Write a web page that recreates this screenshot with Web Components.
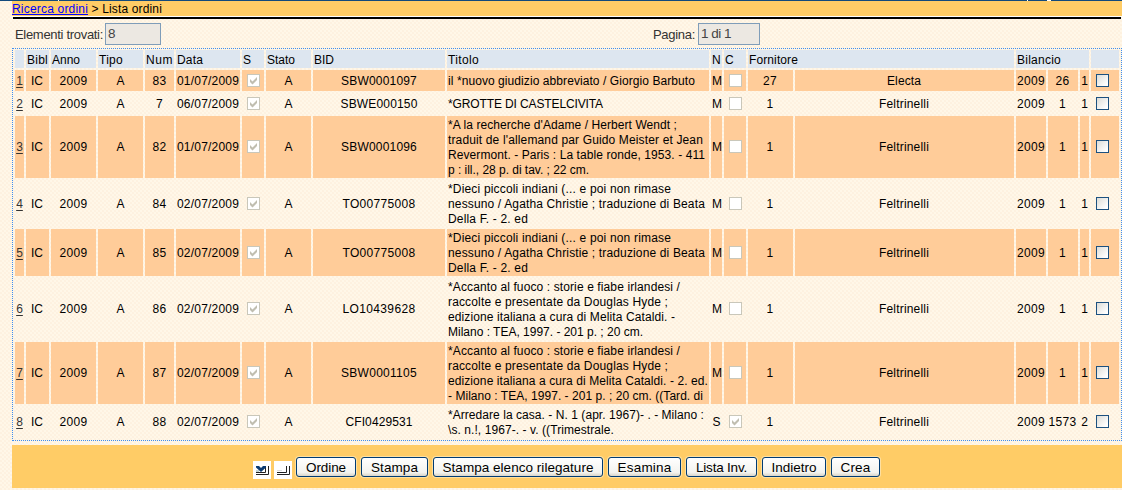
<!DOCTYPE html>
<html lang="it"><head><meta charset="utf-8"><title>Lista ordini</title>
<style>
html,body{margin:0;height:490px;overflow:hidden}
body{font:12px "Liberation Sans",Arial,sans-serif;color:#000;background:#fff6e6}
</style></head><body>
<order-page></order-page>
<script>
const define=(name,css,html,init)=>customElements.define(name,class extends HTMLElement{
  connectedCallback(){
    if(this.shadowRoot)return;
    const root=this.attachShadow({mode:'open'});
    const t=document.createElement('template');
    t.innerHTML='<style>'+css+'</style>'+(typeof html==='function'?html(this):html);
    root.appendChild(t.content.cloneNode(true));
    if(init)init(this,root);
  }
});

// Text set to a given width by adjusting its letter spacing.
define('fit-text',':host{display:inline-block;white-space:pre}span{display:inline-block}','<span><slot></slot></span>',(el,root)=>{
  const w=+el.getAttribute('w');if(!w)return;
  const s=root.querySelector('span'),n=el.textContent.length;
  s.style.letterSpacing=((w-s.getBoundingClientRect().width)/n)+'px';
});

define('check-box',`:host{display:block;width:13px;height:13px;box-sizing:border-box;border:1px solid #c9c7ba;background:#fff}
:host([active]){border-color:#1c5180;background:linear-gradient(135deg,#dcdcd7,#fff 85%)}
svg{display:block}`,el=>el.hasAttribute('checked')?'<svg width="11" height="11"><path d="M2 4 4.5 6.4 9 2V5L4.5 9.4 2 7Z" fill="#c0beb0"/></svg>':'');

define('crumb-bar',`:host{display:block;height:23px;box-sizing:border-box;border-top:1px solid #124a7c;position:relative}
nav{height:15px;margin-left:12px;background:#ffcc66;line-height:17px;white-space:pre;border-bottom:1px solid #fff}
a{display:inline-block;height:14px;box-sizing:border-box;color:#00f;border-bottom:1px solid #00f;vertical-align:top;text-decoration:none}
hr{margin:0 1px 0 13px;border:0;height:2px;background:#000}
i{position:absolute;top:-1px;height:1px;background:#fff}`,
'<nav><a href="#"><fit-text w="76">Ricerca ordini</fit-text></a><fit-text w="74"> &gt; Lista ordini</fit-text></nav><hr><i style="left:58px;width:1px"></i><i style="left:1027px;width:1px"></i><i style="left:1047px;width:4px"></i>');

define('read-field',`:host{display:flex;font-size:13px;color:#333}
label{padding-top:4px;line-height:15px}
div{box-sizing:border-box;height:22px;border:1px solid #7f9db9;background:#ece8e2;font-size:13.5px;line-height:16px;padding:2px 0 0 2px;color:#444}`,
el=>`<label><fit-text w="${el.getAttribute('lw')}">${el.getAttribute('label')}</fit-text></label><div style="width:${el.getAttribute('fw')}px;margin-left:${el.getAttribute('gap')}px"><slot></slot></div>`);

define('data-cell',`:host{display:flex;box-sizing:border-box;align-items:center;justify-content:center;overflow:hidden;line-height:15px;white-space:nowrap}
:host([low]){padding-top:2px}
:host([left]){justify-content:flex-start;padding-left:1px}
:host([odd]){background:#ffcc99}
:host([head]){justify-content:flex-start;padding-left:1px;padding-top:2px;background:#dde6f0}
:host([pick]){justify-content:flex-start;padding-left:5px}
:host([up]){padding-bottom:1px}
:host([mark]){padding-left:1px}`,'<slot></slot>');

const titles=[
 [['il *nuovo giudizio abbreviato / Giorgio Barbuto',247]],
 [['*GROTTE DI CASTELCIVITA',155]],
 [["*A la recherche d'Adame / Herbert Wendt ;",229],["traduit de l'allemand par Guido Meister et Jean",255],['Revermont. - Paris : La table ronde, 1953. - 411',257],['p : ill., 28 p. di tav. ; 22 cm.',141]],
 [['*Dieci piccoli indiani (... e poi non rimase',223],['nessuno / Agatha Christie ; traduzione di Beata',257],['Della F. - 2. ed',80]],
 [['*Dieci piccoli indiani (... e poi non rimase',223],['nessuno / Agatha Christie ; traduzione di Beata',257],['Della F. - 2. ed',80]],
 [['*Accanto al fuoco : storie e fiabe irlandesi /',232],['raccolte e presentate da Douglas Hyde ;',220],['edizione italiana a cura di Melita Cataldi. -',227],['Milano : TEA, 1997. - 201 p. ; 20 cm.',195]],
 [['*Accanto al fuoco : storie e fiabe irlandesi /',232],['raccolte e presentate da Douglas Hyde ;',220],['edizione italiana a cura di Melita Cataldi. - 2. ed.',260],['- Milano : TEA, 1997. - 201 p. ; 20 cm. ((Tard. di',255]],
 [['*Arredare la casa. - N. 1 (apr. 1967)- . - Milano :',256],['\\s. n.!, 1967-. - v. ((Trimestrale.',166]]];
const rows=[['83','01','SBW0001097',76,'M','27','Electa','26','1'],['7','06','SBWE000150',77,'M','1','Feltrinelli','1','1'],
['82','01','SBW0001096',76,'M','1','Feltrinelli','1','1'],['84','02','TO00775008',73,'M','1','Feltrinelli','1','1'],['85','02','TO00775008',73,'M','1','Feltrinelli','1','1'],
['86','02','LO10439628',73,'M','1','Feltrinelli','1','1'],['87','02','SBW0001105',76,'M','1','Feltrinelli','1','1'],['88','02','CFI0429531',67,'S','1','Feltrinelli','1573','2']];
const f=(t,w)=>`<fit-text w="${w||''}">${t}</fit-text>`;
const num=t=>f(t,t.length*7);

define('order-grid',`:host{display:grid;box-sizing:border-box;margin:3px 0 0 12px;width:1110px;height:393px;border:1px dotted #3f8ff0;padding:1px 1px 1px 2px;gap:2px;
grid-template-columns:9px 23px 45px 45px 29px 64px 22px 45px 132px 262px 11px 22px 45px 219px 30px 30px 9px 28px;
grid-template-rows:18px 21px 21px 62px 47px 47px 62px 62px 32px}
a{color:#333;text-decoration:underline;text-underline-offset:2px}
.t{display:flex;flex-direction:column;align-items:flex-start}`,()=>{
 const heads=[['',0],['Bibl',21],['Anno',28],['Tipo',24],['Num',27],['Data',26],['S',8],['Stato',28],['BID',20],['Titolo',31],['N',9],['C',9],['Fornitore',49,2],['Bilancio',44,3],['',0]];
 let h=heads.map(([t,w,s])=>`<data-cell head${s?` style="grid-column:span ${s}"`:''}>${t?f(t,w):''}</data-cell>`).join('');
 rows.forEach((r,i)=>{
  const tall=[2,5,6,7].includes(i),low=tall?'':'low',up=tall?'up':'';
  const cell=(x,a)=>`<data-cell${i%2?'':' odd'} ${a}>${x}</data-cell>`;
  const c=(x,a='')=>cell(x,low+' '+a),k=(x,a)=>cell(x,up+' '+a);
  h+=c(`<a href="#">${i+1}</a>`)+c(f('IC',12),'style="padding-right:1px"')+c(num('2009'))+c('A')+c(num(r[0]))+c(f(r[1]+'/07/2009',62))
   +k('<check-box checked></check-box>','mark')+c('A')+c(f(r[2],r[3]))
   +cell('<div class="t">'+titles[i].map(([t,w])=>f(t,w)).join('')+'</div>','left low')
   +c(f(r[4],r[4]=='M'?9:8))+k(`<check-box${i==7?' checked':''}></check-box>`,'mark')
   +c(num(r[5]),'style="padding-right:1px"')+c(f(r[6],r[6]=='Electa'?34:50),'style="padding-right:1px"')+c(num('2009'))+c(num(r[7]),'style="padding-right:1px"')+c(r[8])+k('<check-box active></check-box>','pick');
 });
 return h;
});

define('push-button',`:host{display:block}
button{display:flex;align-items:center;justify-content:center;box-sizing:border-box;width:100%;height:20px;margin:0;padding:0;border:1px solid #003c74;border-radius:3px;background:linear-gradient(#fff,#f3f3ef 80%,#d9d5c9);font:13.5px "Liberation Sans",Arial,sans-serif;color:#000;box-shadow:0 0 0 1px #ffe0a0}`,
el=>`<button type="button"><fit-text w="${el.getAttribute('tw')}">${el.textContent}</fit-text></button>`,el=>{el.style.width=el.getAttribute('w')+'px'});

define('select-icon',`:host{display:block;width:18px;height:18px;background:#fff;margin-top:4px}svg{display:block}`,
el=>'<svg width="18" height="18"><path d="M3 11.5H12.5V5M3 13.5H15.5V5" fill="none" stroke="#222" stroke-width="1"/>'+(el.hasAttribute('on')?'<path d="M3 5H6L8 7 10 5H13V6.5L8 11 3 6.5Z" fill="#0b3b73"/><path d="M3 10H6" stroke="#8aa" stroke-width="1"/>':'<path d="M3 9.5H8" stroke="#ddd"/>')+'</svg>');

define('action-bar',`:host{display:flex;box-sizing:border-box;height:43px;margin:4px 0 0 12px;padding:12px 0 0 241px;background:#ffcc66}
.icons{display:flex;gap:3px;margin-right:4px}.buttons{display:flex;gap:5px}`,
'<div class="icons"><select-icon on></select-icon><select-icon></select-icon></div><div class="buttons">'+[['Ordine',60,40],['Stampa',67,47],['Stampa elenco rilegature',170,151],['Esamina',73,54],['Lista Inv.',71,51],['Indietro',64,45],['Crea',49,30]].map(([t,w,x])=>`<push-button w="${w}" tw="${x}">${t}</push-button>`).join('')+'</div>');

define('order-page',`:host{display:block;height:490px;width:1122px;overflow:hidden;background:
radial-gradient(circle at 1px 1px,#fcebd8 .5px,transparent .9px) 0 0/4px 4px,
radial-gradient(circle at 1px 1px,#fcebd8 .5px,transparent .9px) 2px 2px/4px 4px,#fff7e8}
.info{display:flex;height:22px;padding-left:15px}`,
'<crumb-bar></crumb-bar><div class="info"><read-field label="Elementi trovati:" lw="88" fw="56" gap="2">8</read-field><read-field label="Pagina:" lw="42" fw="62" gap="3" style="margin-left:492px"><fit-text w="30">1 di 1</fit-text></read-field></div><order-grid></order-grid><action-bar></action-bar>');
</script></body></html>
